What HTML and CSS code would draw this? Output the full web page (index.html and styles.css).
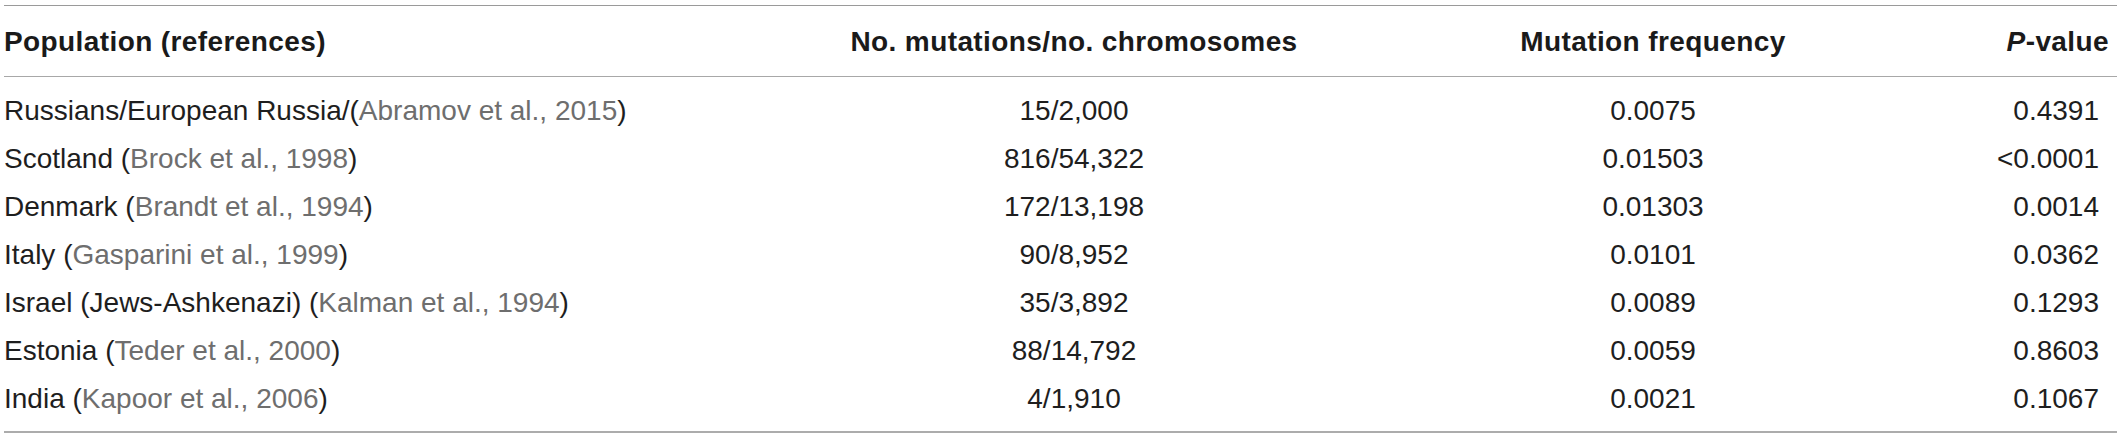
FILE: index.html
```html
<!DOCTYPE html>
<html lang="en">
<head>
<meta charset="utf-8">
<title>Mutation frequency table</title>
<link rel="stylesheet" href="styles.css">
</head>
<body>
<div class="wrap">
<table class="data">
  <colgroup>
    <col class="c1"><col class="c2"><col class="c3"><col class="c4">
  </colgroup>
  <thead>
    <tr>
      <th class="left">Population (references)</th>
      <th class="center">No. mutations/no. chromosomes</th>
      <th class="center">Mutation frequency</th>
      <th class="right"><i>P</i>-value</th>
    </tr>
  </thead>
  <tbody>
    <tr>
      <td class="left">Russians/European Russia/(<span class="ref">Abramov et al., 2015</span>)</td>
      <td class="center">15/2,000</td>
      <td class="center">0.0075</td>
      <td class="right">0.4391</td>
    </tr>
    <tr>
      <td class="left">Scotland (<span class="ref">Brock et al., 1998</span>)</td>
      <td class="center">816/54,322</td>
      <td class="center">0.01503</td>
      <td class="right">&lt;0.0001</td>
    </tr>
    <tr>
      <td class="left">Denmark (<span class="ref">Brandt et al., 1994</span>)</td>
      <td class="center">172/13,198</td>
      <td class="center">0.01303</td>
      <td class="right">0.0014</td>
    </tr>
    <tr>
      <td class="left">Italy (<span class="ref">Gasparini et al., 1999</span>)</td>
      <td class="center">90/8,952</td>
      <td class="center">0.0101</td>
      <td class="right">0.0362</td>
    </tr>
    <tr>
      <td class="left">Israel (Jews-Ashkenazi) (<span class="ref">Kalman et al., 1994</span>)</td>
      <td class="center">35/3,892</td>
      <td class="center">0.0089</td>
      <td class="right">0.1293</td>
    </tr>
    <tr>
      <td class="left">Estonia (<span class="ref">Teder et al., 2000</span>)</td>
      <td class="center">88/14,792</td>
      <td class="center">0.0059</td>
      <td class="right">0.8603</td>
    </tr>
    <tr>
      <td class="left">India (<span class="ref">Kapoor et al., 2006</span>)</td>
      <td class="center">4/1,910</td>
      <td class="center">0.0021</td>
      <td class="right">0.1067</td>
    </tr>
  </tbody>
</table>
</div>
</body>
</html>
```

FILE: styles.css
```css
html, body {
  margin: 0;
  padding: 0;
  background: #ffffff;
}

.wrap {
  padding: 5px 0 0 4px;
}

.data {
  width: 2113px;
  table-layout: fixed;
  border-collapse: collapse;
  font-family: "Liberation Sans", Arial, Helvetica, sans-serif;
  font-size: 28px;
  line-height: 48px;
  color: #1e1e1e;
}

.c1 { width: 756px; }
.c2 { width: 628px; }
.c3 { width: 530px; }
.c4 { width: 199px; }

.data thead tr {
  border-top: 1px solid #9a9a9a;
  border-bottom: 1px solid #a8a8a8;
}

.data th {
  font-weight: 700;
  letter-spacing: 0.4px;
  color: #1a1a1a;
  padding: 12px 0 10px 0;
  white-space: nowrap;
}

.data th i {
  font-style: italic;
}

.data td {
  padding: 0;
  white-space: nowrap;
}

.data tbody tr:first-child td {
  padding-top: 10px;
}

.data tbody tr:last-child td {
  padding-bottom: 8px;
}

.data tbody tr:last-child {
  border-bottom: 2px solid #acacac;
}

.left { text-align: left; }
.center { text-align: center; }

.data th.right {
  text-align: right;
  padding-right: 8px;
}

.data td.right {
  text-align: right;
  padding-right: 18px;
}

.ref {
  color: #6e6e6e;
}
```
